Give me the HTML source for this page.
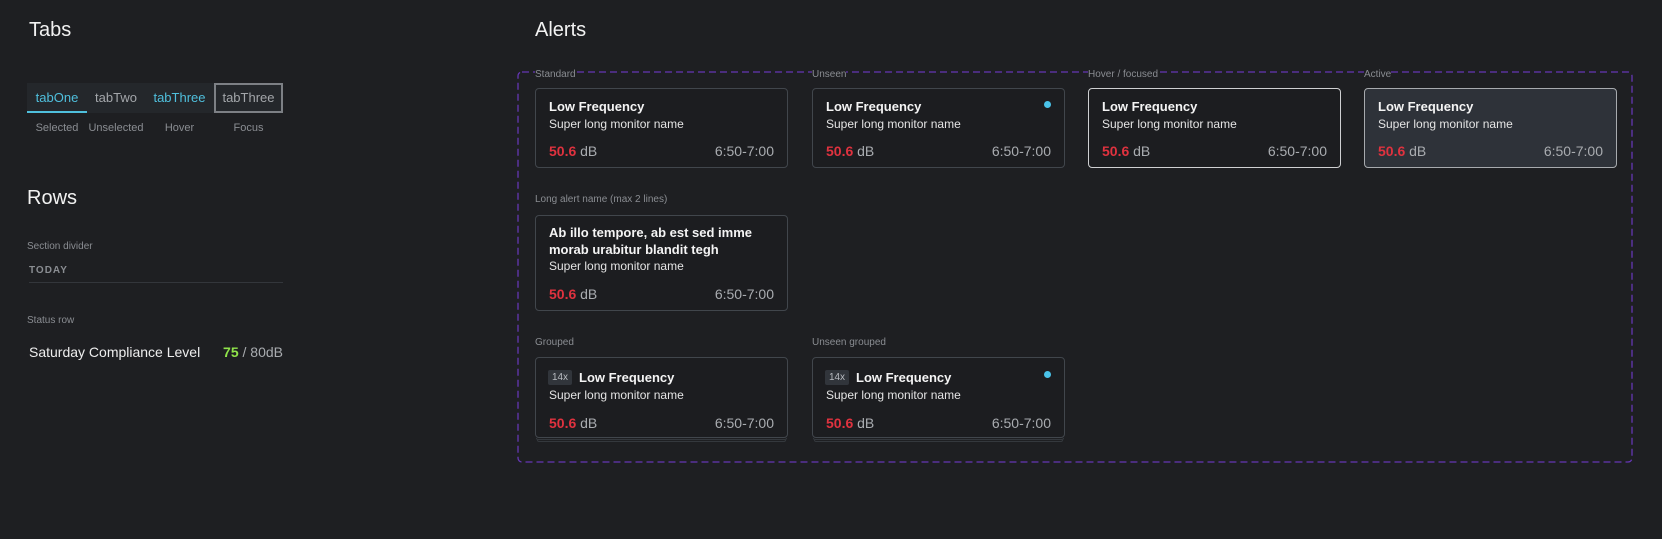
<!DOCTYPE html>
<html><head><style>
*{box-sizing:border-box;margin:0;padding:0}
body{width:1662px;height:539px;background:#1e1f22;font-family:"Liberation Sans",sans-serif;position:relative;overflow:hidden;color:#fff}
.a{position:absolute;white-space:nowrap}
.h{font-size:20px;color:#f2f2f2;line-height:24px}
.lbl{font-size:10px;color:#8a8d92;line-height:12px}
.tab{position:absolute;top:83px;height:30px;line-height:30px;font-size:13px;text-align:center}
.card{position:absolute;width:253px;border:1px solid #41464c;border-radius:4px;background:#1c1d20}
.card div{line-height:16px}
.t{position:absolute;left:13px;font-size:13px;font-weight:bold;color:#f4f4f4;white-space:nowrap}
.s{position:absolute;left:13px;font-size:12px;color:#e4e4e4;white-space:nowrap}
.v{position:absolute;left:13px;font-size:14px;color:#a9acb0;white-space:nowrap}
.v b{color:#e0323f}
.tm{position:absolute;right:13px;font-size:14px;color:#a9acb0}
.dot{position:absolute;right:13px;width:7px;height:7px;border-radius:50%;background:#4ac3e9}
.bd{position:absolute;left:12px;width:24px;height:15px;background:#31353b;border-radius:2px;font-size:10px;color:#b8bbc0;text-align:center;line-height:15px!important}
.st{position:absolute;height:2px;border:1px solid #34383d;border-top:none;border-radius:0 0 4px 4px}
</style></head><body>
<div class="a h" style="left:29px;top:18px">Tabs</div>
<div class="a" style="left:27px;top:83px;width:256px;height:30px;background:#24272b"></div>
<div class="tab" style="left:27px;width:60px;color:#4fbfdc;border-bottom:2px solid #4fbfdc">tabOne</div>
<div class="tab" style="left:87px;width:58px;color:#a3a6aa">tabTwo</div>
<div class="tab" style="left:145px;width:69px;color:#4fbfdc">tabThree</div>
<div class="tab" style="left:214px;width:69px;color:#a3a6aa;border:2px solid #7d8085;line-height:26px">tabThree</div>
<div class="a lbl" style="left:27px;width:60px;text-align:center;top:122px;font-size:11px">Selected</div>
<div class="a lbl" style="left:87px;width:58px;text-align:center;top:122px;font-size:11px">Unselected</div>
<div class="a lbl" style="left:145px;width:69px;text-align:center;top:122px;font-size:11px">Hover</div>
<div class="a lbl" style="left:214px;width:69px;text-align:center;top:122px;font-size:11px">Focus</div>

<div class="a h" style="left:27px;top:186px">Rows</div>
<div class="a lbl" style="left:27px;top:241px">Section divider</div>
<div class="a" style="left:29px;top:265px;font-size:10px;font-weight:bold;color:#8a8d92;letter-spacing:1px">TODAY</div>
<div class="a" style="left:29px;top:282px;width:254px;height:1px;background:#33363b"></div>
<div class="a lbl" style="left:27px;top:315px">Status row</div>
<div class="a" style="left:29px;top:344px;font-size:14px;color:#eee">Saturday Compliance Level</div>
<div class="a" style="left:200px;width:83px;text-align:right;top:344px;font-size:14px;color:#a9acb0"><b style="color:#8fe34a">75</b> / 80dB</div>

<div class="a h" style="left:535px;top:18px">Alerts</div>
<svg class="a" style="left:517px;top:71px" width="1117" height="393"><rect x="1" y="1" width="1114" height="390" rx="4" fill="none" stroke="#6436b4" stroke-width="1.3" stroke-dasharray="7 4"/></svg>

<div class="a lbl" style="left:535px;top:69px;background:#1e1f22">Standard</div>
<div class="a lbl" style="left:812px;top:69px;background:#1e1f22">Unseen</div>
<div class="a lbl" style="left:1088px;top:69px;background:#1e1f22">Hover / focused</div>
<div class="a lbl" style="left:1364px;top:69px;background:#1e1f22">Active</div>

<div class="card" style="left:535px;top:88px;height:80px"><div class="t" style="top:10px">Low Frequency</div><div class="s" style="top:27px">Super long monitor name</div><div class="v" style="top:54px"><b>50.6</b> dB</div><div class="tm" style="top:54px">6:50-7:00</div></div>
<div class="card" style="left:812px;top:88px;height:80px"><div class="t" style="top:10px">Low Frequency</div><div class="dot" style="top:12px"></div><div class="s" style="top:27px">Super long monitor name</div><div class="v" style="top:54px"><b>50.6</b> dB</div><div class="tm" style="top:54px">6:50-7:00</div></div>
<div class="card" style="left:1088px;top:88px;height:80px;border-color:#cfd0d2"><div class="t" style="top:10px">Low Frequency</div><div class="s" style="top:27px">Super long monitor name</div><div class="v" style="top:54px"><b>50.6</b> dB</div><div class="tm" style="top:54px">6:50-7:00</div></div>
<div class="card" style="left:1364px;top:88px;height:80px;border-color:#a7aaae;background:#2e3239"><div class="t" style="top:10px">Low Frequency</div><div class="s" style="top:27px">Super long monitor name</div><div class="v" style="top:54px"><b>50.6</b> dB</div><div class="tm" style="top:54px">6:50-7:00</div></div>

<div class="a lbl" style="left:535px;top:194px">Long alert name (max 2 lines)</div>
<div class="card" style="left:535px;top:215px;height:96px"><div class="t" style="top:8px;line-height:17px">Ab illo tempore, ab est sed imme<br>morab urabitur blandit tegh</div><div class="s" style="top:42px">Super long monitor name</div><div class="v" style="top:70px"><b>50.6</b> dB</div><div class="tm" style="top:70px">6:50-7:00</div></div>

<div class="a lbl" style="left:535px;top:337px">Grouped</div>
<div class="a lbl" style="left:812px;top:337px">Unseen grouped</div>
<div class="st" style="left:536px;top:438px;width:251px"></div><div class="st" style="left:537px;top:440px;width:249px"></div>
<div class="st" style="left:813px;top:438px;width:251px"></div><div class="st" style="left:814px;top:440px;width:249px"></div>
<div class="card" style="left:535px;top:357px;height:81px"><div class="bd" style="top:12px">14x</div><div class="t" style="top:12px;left:43px">Low Frequency</div><div class="s" style="top:29px">Super long monitor name</div><div class="v" style="top:57px"><b>50.6</b> dB</div><div class="tm" style="top:57px">6:50-7:00</div></div>
<div class="card" style="left:812px;top:357px;height:81px"><div class="bd" style="top:12px">14x</div><div class="t" style="top:12px;left:43px">Low Frequency</div><div class="dot" style="top:13px"></div><div class="s" style="top:29px">Super long monitor name</div><div class="v" style="top:57px"><b>50.6</b> dB</div><div class="tm" style="top:57px">6:50-7:00</div></div>
</body></html>
